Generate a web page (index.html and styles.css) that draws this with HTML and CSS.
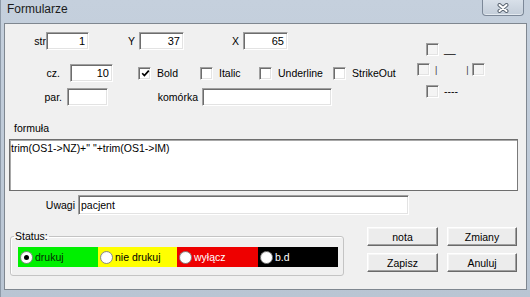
FILE: index.html
```html
<!DOCTYPE html>
<html lang="pl">
<head>
<meta charset="UTF-8">
<meta name="viewport" content="width=device-width, initial-scale=1.0">
<title>Formularze</title>

<link rel="stylesheet" href="styles.css">
</head>

<body>

<div class="win">
  <div class="titlebar">
    <span class="title">Formularze</span>
    <div class="close">
      <svg width="14" height="10" viewBox="0 0 14 10">
        <path d="M3.5 2 L10.5 8 M10.5 2 L3.5 8" stroke="#5b6673" stroke-width="4" stroke-linecap="round"/>
        <path d="M3.5 2 L10.5 8 M10.5 2 L3.5 8" stroke="#fff" stroke-width="2" stroke-linecap="round"/>
      </svg>
    </div>
  </div>

  <div class="client">

    <div class="top">
      <div class="fields">
        <div class="row">
          <span class="lbl l-str">str</span><input class="edit num w43" value="1">
          <span class="lbl l-y">Y</span><input class="edit num w45" value="37">
          <span class="lbl l-x">X</span><input class="edit num w45" value="65">
        </div>

        <div class="row r2">
          <span class="lbl l-cz">cz.</span><input class="edit num w43" value="10">
          <label class="chk c-bold">
            <span class="box">
              <svg width="9" height="9" viewBox="0 0 9 9"><polyline points="1.2,4.2 3.4,6.6 7.8,1.6" fill="none" stroke="#000" stroke-width="1.7"/></svg>
            </span>Bold
          </label>
          <label class="chk c-italic"><span class="box"></span>Italic</label>
          <label class="chk c-under"><span class="box"></span>Underline</label>
          <label class="chk"><span class="box"></span>StrikeOut</label>
        </div>

        <div class="row r3">
          <span class="lbl l-par">par.</span><input class="edit w41" value="">
          <span class="lbl l-kom">komórka</span><input class="edit w130" value="">
        </div>
      </div>

      <div class="lines">
        <div class="lrow l1"><span class="box off"></span><span class="mark">__</span></div>
        <div class="lrow l2">
          <span class="box off"></span><span class="bar">|</span>
          <span class="bar bar-r">|</span><span class="box off"></span>
        </div>
        <div class="lrow l3"><span class="box off"></span><span class="mark">----</span></div>
      </div>
    </div>

    <div class="flabel">formuła</div>
    <textarea class="formula">trim(OS1-&gt;NZ)+" "+trim(OS1-&gt;IM)</textarea>

    <div class="row uwagi">
      <span class="lbl l-uw">Uwagi</span><input class="edit w331" value="pacjent">
    </div>

    <div class="bottom">
      <fieldset class="status">
        <legend>Status:</legend>
        <div class="strip">
          <div class="seg green"><span class="radio on"></span>drukuj</div>
          <div class="seg yellow"><span class="radio"></span>nie drukuj</div>
          <div class="seg red"><span class="radio"></span>wyłącz</div>
          <div class="seg black"><span class="radio"></span>b.d</div>
        </div>
      </fieldset>

      <div class="buttons">
        <button class="btn">nota</button>
        <button class="btn">Zmiany</button>
        <button class="btn">Zapisz</button>
        <button class="btn">Anuluj</button>
      </div>
    </div>

  </div>
</div>

</body>
</html>
```

FILE: styles.css
```css
body {
  margin: 0;
  font-family: "Liberation Sans", Arial, sans-serif;
  font-size: 10.5px;
  color: #000;
  background: #c0ccd9;
}

.win {
  width: 530px;
  height: 297px;
  box-sizing: border-box;
  background: linear-gradient(#c5d0dd, #b9c5d3);
  border-left: 1px solid #8e9aa8;
  overflow: hidden;
}

/* title bar */

.titlebar {
  display: flex;
  align-items: flex-start;
  height: 23px;
}

.title {
  font-size: 12px;
  line-height: 19px;
  padding-left: 6px;
  color: #1b1b1b;
}

.close {
  margin-left: auto;
  margin-right: 6px;
  width: 42px;
  height: 16px;
  box-sizing: border-box;
  border: 1px solid #7c8898;
  border-top: none;
  border-radius: 0 0 4px 4px;
  background: linear-gradient(#d8e0e9, #c3cdd9);
  box-shadow: inset 0 -1px #e4eaf0;
  display: flex;
  align-items: center;
  justify-content: center;
}

/* client area */

.client {
  margin: 0 3px 0 3px;
  height: 267px;
  box-sizing: border-box;
  border: 1px solid #7f8790;
  background: #f0f0f0;
}

.top {
  display: flex;
  padding-top: 8px;
}

.fields {
  width: 412px;
}

.row {
  display: flex;
  align-items: center;
  height: 18px;
}

.r2 { margin-top: 14px; }
.r3 { margin-top: 6px; }

.lbl {
  box-sizing: border-box;
  text-align: right;
  line-height: 18px;
  white-space: nowrap;
}

.l-str { width: 41px; }
.l-y { width: 50px; padding-right: 4px; }
.l-x { width: 59px; padding-right: 4px; }
.l-cz { width: 65px; padding-right: 10px; }
.l-par { width: 62px; padding-right: 5px; }
.l-kom { width: 94px; padding-right: 4px; }
.l-uw { width: 73px; padding-right: 3px; }

.edit {
  height: 18px;
  box-sizing: border-box;
  margin: 0;
  padding: 0 3px;
  font-family: inherit;
  font-size: 11px;
  color: #000;
  background: #fff;
  border: 1px solid;
  border-color: #a0a0a0 #fff #fff #a0a0a0;
  box-shadow: inset 1px 1px #6d6d6d, inset -1px -1px #e3e3e3;
  outline: none;
}

.num { text-align: right; }

.w41 { width: 41px; }
.w43 { width: 43px; }
.w45 { width: 45px; }
.w130 { width: 130px; }
.w331 { width: 331px; }

/* checkboxes */

.chk {
  display: flex;
  align-items: center;
}

.r2 .c-bold { margin-left: 25px; width: 62px; }
.c-italic { width: 59px; }
.c-under { width: 74px; }

.box {
  width: 13px;
  height: 13px;
  box-sizing: border-box;
  border: 1px solid;
  border-color: #a0a0a0 #fff #fff #a0a0a0;
  box-shadow: inset 1px 1px #6d6d6d, inset -1px -1px #e3e3e3;
  background: #fff;
  margin-right: 6px;
  display: flex;
  align-items: center;
  justify-content: center;
  flex-shrink: 0;
}

.box svg {
  margin: 1px 0 0 1px;
}

.box.off {
  background: #f4f4f4;
  margin-right: 0;
}

.lines {
  margin-top: 11px;
}

.lrow {
  display: flex;
  align-items: center;
  height: 13px;
}

.l1, .l3 { padding-left: 9px; }
.l2 { margin-top: 7px; }
.l3 { margin-top: 9px; }

.mark {
  margin-left: 5px;
  line-height: 13px;
}

.bar {
  font-size: 9px;
  color: #3a3a3a;
  margin-left: 5px;
}

.bar-r {
  margin-left: 29px;
  margin-right: 3px;
}

/* formula */

.flabel {
  margin: 16px 0 0 9px;
  line-height: 12px;
}

.formula {
  display: block;
  margin: 5px 0 0 4px;
  width: 509px;
  height: 52px;
  box-sizing: border-box;
  padding: 2px 0 0 1px;
  font-family: inherit;
  font-size: 10.5px;
  color: #000;
  background: #fff;
  border: 1px solid #6e6e6e;
  border-right-color: #7a7a7a;
  box-shadow: inset 1px 1px #a8a8a8;
  resize: none;
  overflow: hidden;
  outline: none;
}

.uwagi {
  margin-top: 4px;
  height: 20px;
}

.uwagi .edit {
  height: 20px;
  text-align: left;
  padding-left: 2px;
  font-size: 10.5px;
}

/* bottom: status + buttons */

.bottom {
  display: flex;
  align-items: flex-start;
  margin-top: 12px;
}

.status {
  margin: 3px 0 0 5px;
  width: 334px;
  box-sizing: border-box;
  padding: 5px 5px 8px 7px;
  border: 1px solid #c4c4c4;
  border-radius: 3px;
  box-shadow: inset 1px 1px #fff;
}

.status legend {
  margin-left: -4px;
  padding: 0 1px;
  line-height: 12px;
}

.strip {
  display: flex;
  height: 20px;
}

.seg {
  display: flex;
  align-items: center;
  padding-left: 2px;
  box-sizing: border-box;
}

.green { width: 80px; background: #00f000; color: #062a06; }
.yellow { width: 79px; background: #ffff00; }
.red { width: 81px; background: #ee0000; color: #fff; }
.black { width: 80px; background: #000; color: #fff; }

.radio {
  width: 13px;
  height: 13px;
  box-sizing: border-box;
  border-radius: 50%;
  border: 1px solid #8a8a8a;
  background: radial-gradient(circle at 60% 60%, #fff 55%, #dcdcdc);
  margin-right: 2px;
  position: relative;
}

.radio.on::after {
  content: "";
  position: absolute;
  left: 3px;
  top: 3px;
  width: 5px;
  height: 5px;
  border-radius: 50%;
  background: #000;
}

.buttons {
  margin-left: 23px;
  display: grid;
  grid-template-columns: 71px 70px;
  grid-auto-rows: 19px;
  column-gap: 9px;
  row-gap: 7px;
}

.btn {
  margin: 0;
  padding: 0;
  font-family: inherit;
  font-size: 10.5px;
  color: #000;
  background: #ececec;
  border: 1px solid;
  border-color: #fff #6a6a6a #6a6a6a #fff;
  box-shadow: inset -1px -1px #a0a0a0, inset 1px 1px #f6f6f6;
}
```
